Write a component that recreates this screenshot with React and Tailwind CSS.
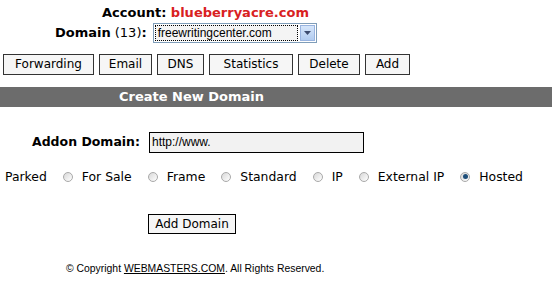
import React from 'react';

const tabs = [
  ['Forwarding', 'w-[91px]'],
  ['Email', 'w-[53px]'],
  ['DNS', 'w-[47px]'],
  ['Statistics', 'w-[84px]'],
  ['Delete', 'w-[62px]'],
  ['Add', 'w-[45px]'],
];
const types = ['For Sale', 'Frame', 'Standard', 'IP', 'External IP', 'Hosted'];

const Radio = ({ checked }) => (
  <span className="inline-flex w-[10px] h-[10px] rounded-full border border-[#a9a9a9] bg-gradient-to-br from-[#d8d8d8] to-[#ffffff] items-center justify-center">
    {checked && <span className="w-[5px] h-[5px] rounded-full bg-[#1f4f7a]" />}
  </span>
);

export default function App() {
  return (
    <div className="w-[552px] h-[292px] bg-white overflow-hidden text-[13px] text-black font-['Verdana','DejaVu_Sans',sans-serif]">
      {/* HEADER */}
      <div className="pt-[3px] pl-[102px] h-[22px] font-bold text-[13px]">
        Account: <span className="text-[#d8211f]">blueberryacre.com</span>
      </div>

      <div className="flex items-center pl-[55px] h-[22px]">
        <span className="font-bold">Domain</span>
        <span className="ml-[4px]">(13)</span>
        <span className="font-bold">:</span>
        <div className="ml-[6px] w-[164px] h-[20px] border border-[#7f9db9] bg-white flex items-center">
          <span className="ml-[1px] flex-1 h-[16px] border border-dotted border-black bg-[#f4f4f4] pl-[2px] text-[12px] leading-[14px] font-['Liberation_Sans',sans-serif]">
            freewritingcenter.com
          </span>
          <span className="ml-[2px] w-[15px] h-[16px] mr-[1px] bg-gradient-to-b from-[#d6e6fb] to-[#b2ccf0] border border-[#99b4e0] flex items-center justify-center">
            <svg width="7" height="4" viewBox="0 0 7 4"><path d="M0 0h7L3.5 4z" fill="#3c4b6e" /></svg>
          </span>
        </div>
      </div>

      <div className="flex pl-[3px] gap-[5px] mt-[10px] text-[12px]">
        {tabs.map(([t, w]) => (
          <button key={t} className={`${w} h-[21px] border border-[#333] bg-[#f6f6f6] leading-[19px] text-center`}>
            {t}
          </button>
        ))}
      </div>

      {/* SECTION BAR */}
      <div className="mt-[12px] h-[20px] bg-[#6c6c6c] text-white font-bold pl-[119px] leading-[20px]">
        Create New Domain
      </div>

      <div className="flex items-center mt-[25px] pl-[32px]">
        <span className="font-bold text-[12.5px]">Addon Domain:</span>
        <div className="ml-[9px] w-[215px] h-[21px] border border-black bg-[#f2f2f2] pl-[2px] text-[12px] leading-[19px] font-['Liberation_Sans',sans-serif]">
          http://www.
        </div>
      </div>

      <div className="flex items-center mt-[14px] pl-[5px] h-[20px] text-[12.4px]">
        <span>Parked</span>
        {types.map((t) => (
          <span key={t} className="flex items-center ml-[16px] gap-[9px]">
            <Radio checked={t === 'Hosted'} />
            <span>{t}</span>
          </span>
        ))}
      </div>

      <div className="pl-[148px] mt-[27px]">
        <button className="w-[88px] h-[20px] border border-black bg-[#f6f6f6] leading-[18px] text-[12px] text-center">Add Domain</button>
      </div>

      <div className="pl-[66px] mt-[27px] text-[10.4px] font-['Liberation_Sans',sans-serif]">
        © Copyright <span className="underline">WEBMASTERS.COM</span>. All Rights Reserved.
      </div>
    </div>
  );
}
